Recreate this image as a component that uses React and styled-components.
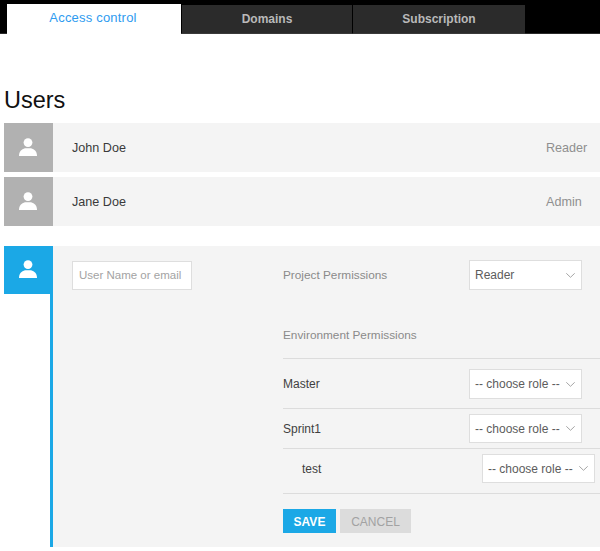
import React from "react";
import styled, { createGlobalStyle } from "styled-components";

const Global = createGlobalStyle`
  html, body { margin: 0; padding: 0; background: #fff; }
  body { font-family: "Liberation Sans", Arial, sans-serif; color: #333; width: 600px; height: 551px; overflow: hidden; }
`;

const TabBar = styled.nav`
  display: flex; align-items: flex-end; height: 34px; padding-left: 7px; gap: 1px;
  background: #000; box-sizing: border-box; box-shadow: inset 0 -1px 0 #2a2a2a;
`;
const Tab = styled.div`
  display: flex; align-items: center; justify-content: center; box-sizing: border-box;
  width: ${p => p.$w}px;
  height: ${p => (p.$active ? 30 : 29)}px;
  padding-bottom: ${p => (p.$active ? 3 : 1)}px;
  padding-right: ${p => (p.$active ? 2 : 0)}px;
  background: ${p => (p.$active ? "#fff" : "#2b2b2b")};
  border-bottom: ${p => (p.$active ? "0" : "1px solid #3a3a3a")};
  color: ${p => (p.$active ? "#2e9bf0" : "#b9b9b9")};
  font-size: ${p => (p.$active ? 13 : 12)}px;
  letter-spacing: ${p => (p.$active ? 0.2 : 0)}px;
  font-weight: ${p => (p.$active ? 400 : 700)};
`;
const Main = styled.main`
  padding: 0 0 0 4px;
`;
const Title = styled.h1`
  margin: 0; padding-top: 52px; height: 37px; box-sizing: content-box;
  font-size: 23.5px; font-weight: 400; line-height: 28px; color: #111;
`;
const UserList = styled.div`
  display: flex; flex-direction: column; gap: 5px;
`;
const UserRow = styled.div`
  display: flex; align-items: center; height: 49px; background: #f4f4f4;
`;
const Avatar = styled.div`
  flex: none; display: flex; align-items: center; justify-content: center;
  width: 49px; height: ${p => (p.$active ? 48 : 49)}px;
  padding: 0 1px 2px 0; box-sizing: border-box;
  background: ${p => (p.$active ? "#1ba8e6" : "#b1b1b1")};
`;
const UserName = styled.span`
  flex: 1; margin-left: 19px; font-size: 12.6px; color: #3a3a3a;
`;
const UserRole = styled.span`
  width: 54px; font-size: 12.6px; color: #8f8f8f;
`;
const Panel = styled.section`
  display: flex; margin-top: 20px; height: 301px; background: #f4f4f4;
`;
const Side = styled.div`
  flex: none; width: 49px; background: linear-gradient(to right, #fff 46px, #1ba8e6 46px);
`;
const NameCol = styled.div`
  flex: none; width: 230px; padding: 15px 0 0 19px; box-sizing: border-box;
`;
const TextInput = styled.div`
  display: flex; align-items: center; box-sizing: border-box; width: 120px; height: 29px;
  padding: 0 0 2px 6px; background: #fff; border: 1px solid #dedede;
  font-size: 11.5px; color: #a3a3a3; white-space: nowrap;
`;
const PermCol = styled.div`
  flex: 1; padding-top: 14px;
`;
const ProjectRow = styled.div`
  display: flex; align-items: center; justify-content: space-between; height: 30px; padding-right: 18px;
`;
const Label = styled.span`
  font-size: 11.8px; color: #8a8a8a;
`;
const EnvHeading = styled.div`
  display: flex; align-items: center; height: 20px; margin-top: 35px; margin-bottom: 13px;
`;
const EnvRow = styled.div`
  display: flex; justify-content: space-between; box-sizing: border-box;
  height: ${p => p.$h}px;
  border-top: 1px solid #dcdcdc;
  padding: ${p => p.$pt}px ${p => (p.$nested ? 5 : 18)}px 0 ${p => (p.$nested ? 19 : 0)}px;
`;
const EnvName = styled.span`
  font-size: 12px; line-height: 14px; color: #3f3f3f; margin-top: ${p => p.$mt}px;
`;
const SelectBox = styled.div`
  display: flex; align-items: center; justify-content: space-between; box-sizing: border-box;
  width: 113px; height: ${p => p.$h || 30}px; padding: 0 6px 0 5px;
  background: #fff; border: 1px solid #dedede;
  font-size: 12px; color: #5c5c5c; white-space: nowrap;
`;
const Actions = styled.div`
  display: flex; gap: 4px; padding-top: 15px; border-top: 1px solid #dcdcdc;
`;
const Button = styled.div`
  display: flex; align-items: center; justify-content: center; height: 24px;
  width: ${p => p.$w}px; padding-top: 1px; box-sizing: border-box;
  background: ${p => (p.$primary ? "#1ba8e6" : "#dcdcdc")};
  color: ${p => (p.$primary ? "#fff" : "#a2a2a2")};
  font-size: 12px; font-weight: ${p => (p.$primary ? 700 : 400)};
`;

const UserIcon = () => (
  <svg width="18" height="18" viewBox="0 0 18 18" fill="#fff">
    <circle cx="9" cy="4.6" r="4.4" />
    <path d="M0 18 C0 13.5 2.5 11 6 10.2 L12 10.2 C15.5 11 18 13.5 18 18 Z" />
  </svg>
);
const Chevron = () => (
  <svg width="9" height="5" viewBox="0 0 9 5" fill="none" stroke="#a5a5a5" strokeWidth="1">
    <path d="M0.3 0.3 L4.5 4.3 L8.7 0.3" />
  </svg>
);
const Select = ({ children, h }) => (
  <SelectBox $h={h}>
    <span>{children}</span>
    <Chevron />
  </SelectBox>
);

export default function App() {
  return (
    <>
      <Global />
      <TabBar>
        <Tab $active $w={174}>Access control</Tab>
        <Tab $w={170}>Domains</Tab>
        <Tab $w={172}>Subscription</Tab>
      </TabBar>
      <Main>
        <Title>Users</Title>
        <UserList>
          <UserRow>
            <Avatar><UserIcon /></Avatar>
            <UserName>John Doe</UserName>
            <UserRole>Reader</UserRole>
          </UserRow>
          <UserRow>
            <Avatar><UserIcon /></Avatar>
            <UserName>Jane Doe</UserName>
            <UserRole>Admin</UserRole>
          </UserRow>
        </UserList>
        <Panel>
          <Side>
            <Avatar $active><UserIcon /></Avatar>
          </Side>
          <NameCol>
            <TextInput>User Name or email</TextInput>
          </NameCol>
          <PermCol>
            <ProjectRow>
              <Label>Project Permissions</Label>
              <Select>Reader</Select>
            </ProjectRow>
            <EnvHeading><Label>Environment Permissions</Label></EnvHeading>
            <EnvRow $h={50} $pt={10}>
              <EnvName $mt={8}>Master</EnvName>
              <Select>-- choose role --</Select>
            </EnvRow>
            <EnvRow $h={40} $pt={5}>
              <EnvName $mt={8}>Sprint1</EnvName>
              <Select h={29}>-- choose role --</Select>
            </EnvRow>
            <EnvRow $h={45} $pt={5} $nested>
              <EnvName $mt={8}>test</EnvName>
              <Select h={29}>-- choose role --</Select>
            </EnvRow>
            <Actions>
              <Button $primary $w={53}>SAVE</Button>
              <Button $w={71}>CANCEL</Button>
            </Actions>
          </PermCol>
        </Panel>
      </Main>
    </>
  );
}
